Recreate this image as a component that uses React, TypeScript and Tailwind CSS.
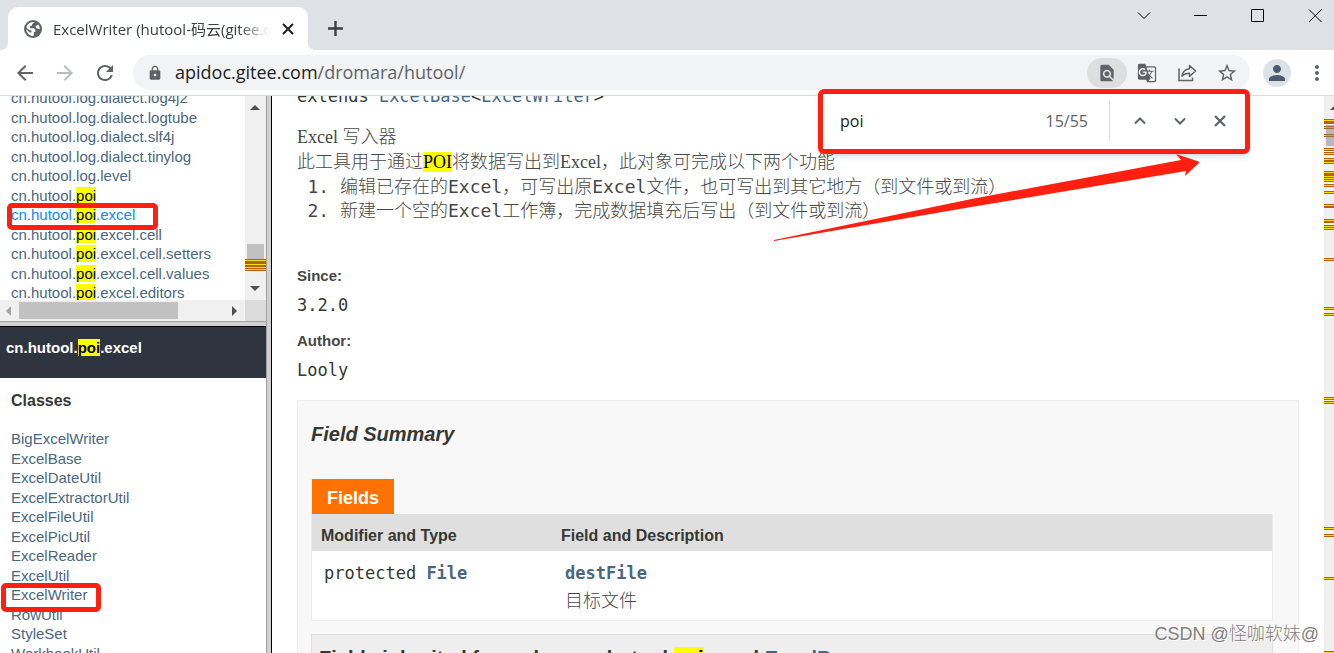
import type { ReactNode } from "react";
import {
  MdArrowBack,
  MdArrowForward,
  MdFindInPage,
  MdGTranslate,
  MdLock,
  MdMoreVert,
  MdPerson,
  MdRefresh,
  MdStarBorder,
} from "react-icons/md";

const packages = [
  "cn.hutool.log.dialect.log4j2",
  "cn.hutool.log.dialect.logtube",
  "cn.hutool.log.dialect.slf4j",
  "cn.hutool.log.dialect.tinylog",
  "cn.hutool.log.level",
  "cn.hutool.poi",
  "cn.hutool.poi.excel",
  "cn.hutool.poi.excel.cell",
  "cn.hutool.poi.excel.cell.setters",
  "cn.hutool.poi.excel.cell.values",
  "cn.hutool.poi.excel.editors",
];

const classes = [
  "BigExcelWriter",
  "ExcelBase",
  "ExcelDateUtil",
  "ExcelExtractorUtil",
  "ExcelFileUtil",
  "ExcelPicUtil",
  "ExcelReader",
  "ExcelUtil",
  "ExcelWriter",
  "RowUtil",
  "StyleSet",
  "WorkbookUtil",
];

// find-in-page ticks on the scrollbar: top, height, rows that are yellow
const ticks: [number, number, number[]][] = [
  [23, 5, [1]],
  [30, 3, [1]],
  [38, 3, [1]],
  [52, 3, [1]],
  [56, 3, [1]],
  [62, 6, [1, 4]],
  [75, 11, [1, 5, 7, 9]],
  [88, 3, [1]],
  [95, 3, [1]],
  [108, 4, [1]],
  [123, 4, [1]],
  [129, 5, [1, 3]],
  [162, 3, [1]],
  [211, 3, [1]],
  [217, 3, [1]],
  [301, 3, [1]],
  [305, 3, [1]],
  [431, 3, [1]],
  [438, 3, [1]],
  [481, 3, [1]],
  [555, 3, [1]],
];

const sideTicks: [number, number, number[]][] = [[163, 12, [1, 5, 8, 10]]];

function Ticks({ items }: { items: [number, number, number[]][] }) {
  return (
    <>
      {items.map(([top, height, rows]) => (
        <div key={top} className="absolute inset-x-0 bg-[#b36200]" style={{ top, height }}>
          {rows.map((r) => (
            <div key={r} className="absolute inset-x-0 h-px bg-[#ffdd00]" style={{ top: r }} />
          ))}
        </div>
      ))}
    </>
  );
}

function Hit({ children }: { children: ReactNode }) {
  return <mark className="bg-[#ffff00] text-black">{children}</mark>;
}

// highlights the search term inside a qualified name
function Marked({ text }: { text: string }) {
  const [before, after] = text.split("poi");
  if (after === undefined) return <>{text}</>;
  return (
    <>
      {before}
      <Hit>poi</Hit>
      {after}
    </>
  );
}

function TabStrip() {
  return (
    <div className="flex h-[50px] shrink-0 items-start bg-[#dee1e6] pl-2 pr-[9px]">
      <div className="relative mt-[7px] flex h-[43px] w-[300px] items-center rounded-t-[10px] bg-white pl-4 pr-2">
        <div className="absolute -left-2 bottom-0 size-2 bg-[radial-gradient(circle_at_0_0,#dee1e6_8px,white_8px)]" />
        <div className="absolute -right-2 bottom-0 size-2 bg-[radial-gradient(circle_at_100%_0,#dee1e6_8px,white_8px)]" />
        <svg viewBox="0 0 18 18" className="size-[18px] shrink-0">
          <circle cx="9" cy="9" r="9" fill="#5f6368" />
          <path
            d="M10.500 2.200L8 4.200v1.600H6.400L5.600 8.200h4.200l1.600 1.600v2.200H9.800v3.400L8.600 16C5 15.600 2.400 12.600 2.200 9.200l3.600 3.400h1.600v-1.800L3.800 9 2.400 7.600C3 4.600 5.600 2.200 9 2z"
            fill="white"
          />
          <path d="M14.200 4.600l-2.600 1.600.8 2 3.200 1C15.800 7.400 15.200 5.800 14.200 4.600z" fill="white" />
        </svg>
        <span className="ml-[11px] w-[219px] overflow-hidden whitespace-nowrap pt-0.5 text-[15px] text-[#3c4043] [mask-image:linear-gradient(to_right,black_85%,transparent_99%)]">
          ExcelWriter (hutool-码云(gitee.com)
        </span>
        <button aria-label="Close tab" className="ml-1 flex size-6 shrink-0 items-center justify-center text-[#202124]">
          <svg viewBox="0 0 12 12" className="size-3" stroke="currentColor" strokeWidth="2">
            <path d="M1 1l10 10M11 1L1 11" />
          </svg>
        </button>
      </div>
      <button aria-label="New tab" className="ml-[15px] mt-4 text-[#3c4043]">
        <svg viewBox="0 0 24 24" className="size-6" stroke="currentColor" strokeWidth="2.4">
          <path d="M12.500 5v15M5 12.500h15" />
        </svg>
      </button>
      <div className="ml-auto mt-1.5 flex gap-[37px] text-black">
        <button aria-label="Search tabs">
          <svg viewBox="0 0 20 20" className="size-5" fill="none" stroke="currentColor">
            <path d="M4 6.5l6 6 6-6" />
          </svg>
        </button>
        <button aria-label="Minimize">
          <svg viewBox="0 0 20 20" className="size-5" fill="none" stroke="currentColor">
            <path d="M3 9.5h13" />
          </svg>
        </button>
        <button aria-label="Maximize">
          <svg viewBox="0 0 20 20" className="size-5" fill="none" stroke="currentColor">
            <path d="M3.500 3.500h12v12h-12z" />
          </svg>
        </button>
        <button aria-label="Close window">
          <svg viewBox="0 0 20 20" className="size-5" fill="none" stroke="currentColor">
            <path d="M4 3.500l12.500 12.500M16.500 3.500L4 16" />
          </svg>
        </button>
      </div>
    </div>
  );
}

function Toolbar() {
  return (
    <div className="flex h-[46px] shrink-0 items-center border-b border-[#d9dadc] pl-[5px] pr-[5px] text-[#5f6368]">
      <button aria-label="Back" className="flex w-10 justify-center">
        <MdArrowBack className="size-6" />
      </button>
      <button aria-label="Forward" className="flex w-10 justify-center text-[#babcbe]">
        <MdArrowForward className="size-6" />
      </button>
      <button aria-label="Reload" className="flex w-10 justify-center">
        <MdRefresh className="size-6" />
      </button>
      <div className="ml-2 flex h-[35px] flex-1 items-center rounded-full bg-[#f1f3f4] pl-3.5 pr-[3px]">
        <MdLock className="size-4" />
        <a href="#" className="ml-3 pb-0.5 text-lg">
          <span className="text-[#202124]">apidoc.gitee.com</span>/dromara/hutool/
        </a>
        <div className="ml-auto flex items-center">
          <button aria-label="Find in page" className="flex h-[30px] w-10 items-center justify-center rounded-full bg-[#dcdee0]">
            <MdFindInPage className="size-5" />
          </button>
          <button aria-label="Translate" className="flex w-10 justify-center">
            <MdGTranslate className="size-5" />
          </button>
          <button aria-label="Share" className="flex w-10 justify-center">
            <svg viewBox="0 0 20 20" className="size-5" fill="none" stroke="currentColor" strokeWidth="1.500">
              <path d="M2 5.500v12h13.500v-3" />
              <path d="M12.500 2.500l6 5.500-6 5.500v-3.300c-3.300 0-5.600.9-7.500 3 .6-4.200 3-6.900 7.500-7.400z" strokeLinejoin="round" />
            </svg>
          </button>
          <button aria-label="Bookmark" className="flex w-10 justify-center">
            <MdStarBorder className="size-[22px]" />
          </button>
        </div>
      </div>
      <button aria-label="Profile" className="ml-[13px] flex size-7 items-center justify-center rounded-full bg-[#dee1e6] text-[#4b5a6e]">
        <MdPerson className="size-6" />
      </button>
      <button aria-label="Menu" className="ml-3.5">
        <MdMoreVert className="size-6" />
      </button>
    </div>
  );
}

function Sidebar() {
  return (
    <div className="flex w-[266px] shrink-0 flex-col font-['Liberation_Sans',sans-serif]">
      <div className="relative h-[225px] shrink-0">
        <div className="flex h-[204px]">
          <ul className="flex-1 overflow-hidden pl-[11px] text-[15px] leading-5">
            {packages.map((name) => (
              <li key={name} className="first:-mt-2 odd:h-5 even:h-[19px]">
                <a href="#" className={name === "cn.hutool.poi.excel" ? "text-[#0a8cff]" : "text-[#4a6782]"}>
                  <Marked text={name} />
                </a>
              </li>
            ))}
          </ul>
          <div className="relative w-[21px] bg-[#f0f0f0]">
            <svg viewBox="0 0 10 5" className="absolute left-[5px] top-[9px] h-[5px] w-2.5" fill="#505050">
              <path d="M5 0l5 5H0z" />
            </svg>
            <div className="absolute left-0.5 top-[148px] h-5 w-[17px] bg-[#c1c1c1]" />
            <Ticks items={sideTicks} />
            <svg viewBox="0 0 10 5" className="absolute bottom-[9px] left-[5px] h-[5px] w-2.5" fill="#505050">
              <path d="M5 5l5-5H0z" />
            </svg>
          </div>
        </div>
        <div className="flex h-[21px] items-center bg-[#f0f0f0]">
          <svg viewBox="0 0 5 10" className="ml-1.5 h-2.5 w-[5px]" fill="#a3a3a3">
            <path d="M0 5l5-5v10z" />
          </svg>
          <div className="ml-2 h-[17px] w-[159px] bg-[#c1c1c1]" />
          <svg viewBox="0 0 5 10" className="ml-auto mr-2 h-2.5 w-[5px]" fill="#505050">
            <path d="M5 5L0 0v10z" />
          </svg>
          <div className="h-full w-[21px] bg-[#dcdcdc]" />
        </div>
        <div className="absolute left-[7px] top-[107px] h-[27px] w-[151px] rounded-[5px] border-[5px] border-[#ff2010]" />
      </div>
      <div className="h-1.5 shrink-0 border-b border-t border-b-black border-t-[#a0a0a0] bg-[#d0d0d0]" />
      <div className="relative flex-1 overflow-hidden">
        <h1 className="h-[51px] bg-[#2f3441] pl-1.5 pt-[11px] text-[15px] font-bold leading-5 text-white">
          <a href="#">
            <Marked text="cn.hutool.poi.excel" />
          </a>
        </h1>
        <h2 className="mt-[13px] pl-[11px] text-base font-bold leading-5 text-[#353833]">Classes</h2>
        <ul className="mt-[18px] pl-[11px] text-[15px] leading-5">
          {classes.map((name) => (
            <li key={name} className="odd:h-5 even:h-[19px]">
              <a href="#" className="text-[#4a6782]">
                {name}
              </a>
            </li>
          ))}
        </ul>
        <div className="absolute left-px top-[256px] h-[29px] w-[100px] rounded-[5px] border-[5px] border-[#ff2010]" />
      </div>
    </div>
  );
}

function FieldSummary() {
  return (
    <section className="mt-[18px] border border-[#ededed] bg-[#f8f8f8] pl-[13px] pr-[25px] font-['Liberation_Sans','Noto_Sans_CJK_SC',sans-serif] text-[#353833]">
      <h3 className="pt-[19px] text-xl font-bold italic leading-7">Field Summary</h3>
      <table className="mt-[31px] w-full border-separate border-spacing-0 text-left">
        <caption className="pl-px text-left">
          <span className="inline-block h-[35px] bg-[#ff7200] px-[15px] align-top text-lg font-bold leading-[38px] text-white">
            Fields
          </span>
        </caption>
        <thead className="text-base leading-5">
          <tr className="h-[37px] bg-[#dfdfdf]">
            <th className="w-[241px] border-l border-[#ededed] pl-[9px] pt-1.5">Modifier and Type</th>
            <th className="border-r border-[#ededed] pl-[9px] pt-1.5">Field and Description</th>
          </tr>
        </thead>
        <tbody>
          <tr className="h-[70px] bg-white align-top">
            <td className="border-b border-l border-[#ededed] pl-3 pt-2.5 font-['DejaVu_Sans_Mono',monospace] text-[17px] leading-6">
              protected{" "}
              <a href="#" className="font-bold text-[#4a6782]">
                File
              </a>
            </td>
            <td className="border-b border-r border-[#ededed] pl-[13px] pt-2.5">
              <a href="#" className="block font-['DejaVu_Sans_Mono',monospace] text-[17px] font-bold leading-6 text-[#4a6782]">
                destFile
              </a>
              <div className="mt-1 text-lg font-light leading-6 text-[#474747]">目标文件</div>
            </td>
          </tr>
        </tbody>
      </table>
      <div className="mt-[13px] border border-[#dedede] bg-[#eeeeee] px-[7px] pb-4 pt-[11px]">
        <h3 className="text-xl font-bold leading-6">
          Fields inherited from class cn.hutool.<Hit>poi</Hit>.excel.
          <a href="#" className="text-[#4a6782]">
            ExcelBase
          </a>
        </h3>
      </div>
    </section>
  );
}

function Details() {
  return (
    <main className="min-w-0 flex-1 overflow-hidden px-[25px] text-[#474747]">
      <pre className="-mt-3 font-['DejaVu_Sans_Mono',monospace] text-[17px] leading-6 text-[#353833]">
        extends <a href="#" className="text-[#4a6782]">ExcelBase</a>&lt;<a href="#" className="text-[#4a6782]">ExcelWriter</a>&gt;
      </pre>
      <div className="mt-[17px] font-['Liberation_Serif','Noto_Sans_CJK_SC',serif] text-lg font-light leading-[25px]">
        <p>Excel 写入器</p>
        <p>
          此工具用于通过<Hit>POI</Hit>将数据写出到Excel，此对象可完成以下两个功能
        </p>
      </div>
      <ol className="list-decimal pl-[43px] font-['DejaVu_Sans_Mono','Noto_Sans_CJK_SC',monospace] text-lg font-light leading-6">
        <li>编辑已存在的Excel，可写出原Excel文件，也可写出到其它地方（到文件或到流）</li>
        <li>新建一个空的Excel工作簿，完成数据填充后写出（到文件或到流）</li>
      </ol>
      <dl className="mt-[43px]">
        <dt className="font-['Liberation_Sans',sans-serif] text-[15px] font-bold leading-5">Since:</dt>
        <dd className="mb-[14px] mt-[7px] font-['DejaVu_Sans_Mono',monospace] text-[17px] leading-6 text-[#353833]">3.2.0</dd>
        <dt className="font-['Liberation_Sans',sans-serif] text-[15px] font-bold leading-5">Author:</dt>
        <dd className="mt-[7px] font-['DejaVu_Sans_Mono',monospace] text-[17px] leading-6 text-[#353833]">Looly</dd>
      </dl>
      <FieldSummary />
    </main>
  );
}

function FindBar() {
  return (
    <div className="absolute -top-[7px] right-[84px] flex h-[65px] w-[432px] items-center rounded-md border-[5px] border-[#ff2010] bg-white pb-0.5 pl-[17px] pr-[5px] text-base text-[#5f6368] shadow-md">
      <input aria-label="Find" defaultValue="poi" className="w-[180px] text-[#202124] outline-none" />
      <span className="ml-auto">15/55</span>
      <div className="ml-[21px] h-10 w-px bg-[#d9dadc]" />
      <div className="ml-2.5 flex">
        <button aria-label="Previous" className="flex w-10 justify-center">
          <svg viewBox="0 0 20 20" className="size-5" fill="none" stroke="currentColor" strokeWidth="2">
            <path d="M5 12.500l5-5 5 5" />
          </svg>
        </button>
        <button aria-label="Next" className="flex w-10 justify-center">
          <svg viewBox="0 0 20 20" className="size-5" fill="none" stroke="currentColor" strokeWidth="2">
            <path d="M5 7.500l5 5 5-5" />
          </svg>
        </button>
        <button aria-label="Close" className="flex w-10 justify-center">
          <svg viewBox="0 0 20 20" className="size-5" fill="none" stroke="currentColor" strokeWidth="2.2">
            <path d="M5 5l10 10M15 5L5 15" />
          </svg>
        </button>
      </div>
    </div>
  );
}

export default function App() {
  return (
    <div className="flex h-screen flex-col overflow-hidden bg-white font-['Open_Sans','Noto_Sans_CJK_SC',sans-serif]">
      <TabStrip />
      <Toolbar />
      <div className="relative flex min-h-0 flex-1">
        <Sidebar />
        <div className="w-1.5 shrink-0 border-l border-r border-l-[#a0a0a0] border-r-black bg-[#d0d0d0]" />
        <Details />
        <div className="relative w-2.5 shrink-0 overflow-hidden bg-[#f0f0f0]">
          <svg viewBox="0 0 10 5" className="absolute left-1.5 top-[9px] h-[5px] w-2.5" fill="#505050">
            <path d="M5 0l5 5H0z" />
          </svg>
          <Ticks items={ticks} />
          <div className="absolute left-0.5 top-[29px] h-[21px] w-4 bg-[#808080]/50" />
        </div>
        <FindBar />
        <svg viewBox="0 0 426 88" className="absolute right-[134px] top-[58px] h-[88px] w-[426px]" fill="#ff2010">
          <path d="M0 86L200 44.500 407 6 402 0 426 8 411 22 412 17 200 52.500 0 87z" />
        </svg>
        <div className="absolute bottom-[5px] right-[15px] font-['Liberation_Sans','Noto_Sans_CJK_SC',sans-serif] text-lg font-light leading-7 text-[#808080] [text-shadow:1px_1px_0_white]">
          CSDN @怪咖软妹@
        </div>
      </div>
    </div>
  );
}
